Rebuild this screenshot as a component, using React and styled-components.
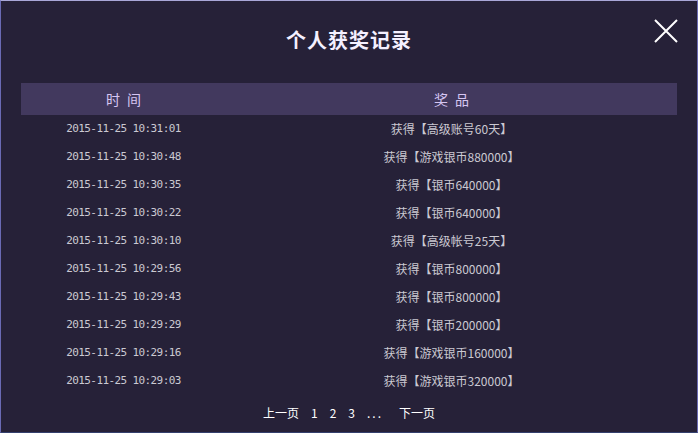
import React from 'react'
import styled, { createGlobalStyle } from 'styled-components'

const records = [
    { time: '2015-11-25 10:31:01', prize: '获得【高级账号60天】' },
    { time: '2015-11-25 10:30:48', prize: '获得【游戏银币880000】' },
    { time: '2015-11-25 10:30:35', prize: '获得【银币640000】' },
    { time: '2015-11-25 10:30:22', prize: '获得【银币640000】' },
    { time: '2015-11-25 10:30:10', prize: '获得【高级帐号25天】' },
    { time: '2015-11-25 10:29:56', prize: '获得【银币800000】' },
    { time: '2015-11-25 10:29:43', prize: '获得【银币800000】' },
    { time: '2015-11-25 10:29:29', prize: '获得【银币200000】' },
    { time: '2015-11-25 10:29:16', prize: '获得【游戏银币160000】' },
    { time: '2015-11-25 10:29:03', prize: '获得【游戏银币320000】' },
]

const App = () => {
  return (
    <>
    <GlobalStyle />
    <Modal>
        <TitleBar>
            <Title>个人获奖记录</Title>
            <Close aria-label="close">
                <svg width="24" height="24" viewBox="0 0 24 24">
                    <path d="M1 1 L23 23 M23 1 L1 23" stroke="#fff" strokeWidth="2" fill="none" />
                </svg>
            </Close>
        </TitleBar>
        <Table>
            <HeadCell>时 间</HeadCell>
            <HeadCell>奖 品</HeadCell>
            {records.map((r, i) => (
                <React.Fragment key={i}>
                    <TimeCell>{r.time}</TimeCell>
                    <PrizeCell>{r.prize}</PrizeCell>
                </React.Fragment>
            ))}
        </Table>
        <Pager>
            <PageLink>上一页</PageLink>
            <PageLink>1</PageLink>
            <PageLink>2</PageLink>
            <PageLink>3</PageLink>
            <Dots>...</Dots>
            <PageLink next>下一页</PageLink>
        </Pager>
    </Modal>
    </>
  )
}

export default App;


const GlobalStyle = createGlobalStyle`
    html, body {
        margin: 0;
        padding: 0;
        background: #262138;
    }
    * {
        box-sizing: border-box;
    }
`

const Modal = styled.div`
    width: 698px;
    height: 433px;
    background: #262138;
    border: 1px solid #6a6ab4;
    border-top-color: #a9a7d8;
    border-bottom-color: #34406e;
    display: flex;
    flex-direction: column;
    font-family: "Noto Sans CJK SC", "Noto Sans", sans-serif;
`

const TitleBar = styled.div`
    position: relative;
    height: 82px;
    padding-top: 27px;
    display: flex;
    justify-content: center;
`

const Title = styled.h1`
    margin: 0;
    font-size: 20px;
    line-height: 24px;
    font-weight: bold;
    color: #f4f0ff;
    letter-spacing: 1px;
`

const Close = styled.div`
    position: absolute;
    top: 18px;
    right: 19px;
    width: 24px;
    height: 24px;
    cursor: pointer;
`

const Table = styled.div`
    margin: 0 20px;
    display: grid;
    grid-template-columns: 205px 1fr;
    grid-template-rows: 32px;
    grid-auto-rows: 28px;
`

const HeadCell = styled.div`
    background: #42395e;
    color: #d6c6f2;
    font-size: 14px;
    line-height: 32px;
    text-align: center;
    white-space: pre;
    word-spacing: 4px;
`

const TimeCell = styled.div`
    text-align: center;
    line-height: 28px;
    font-family: "DejaVu Sans Mono", monospace;
    font-size: 11px;
    letter-spacing: -0.6px;
    color: #cbc9d2;
`

const PrizeCell = styled.div`
    text-align: center;
    line-height: 28px;
    font-size: 12px;
    color: #cbc9d2;
`

const Pager = styled.div`
    display: flex;
    justify-content: center;
    align-items: center;
    gap: 12px;
    height: 34px;
    font-size: 12px;
    color: #fff;
`

const PageLink = styled.span`
    cursor: pointer;
    margin-left: ${p => p.next ? '4px' : '0'};
`

const Dots = styled.span`
    letter-spacing: 2px;
`
